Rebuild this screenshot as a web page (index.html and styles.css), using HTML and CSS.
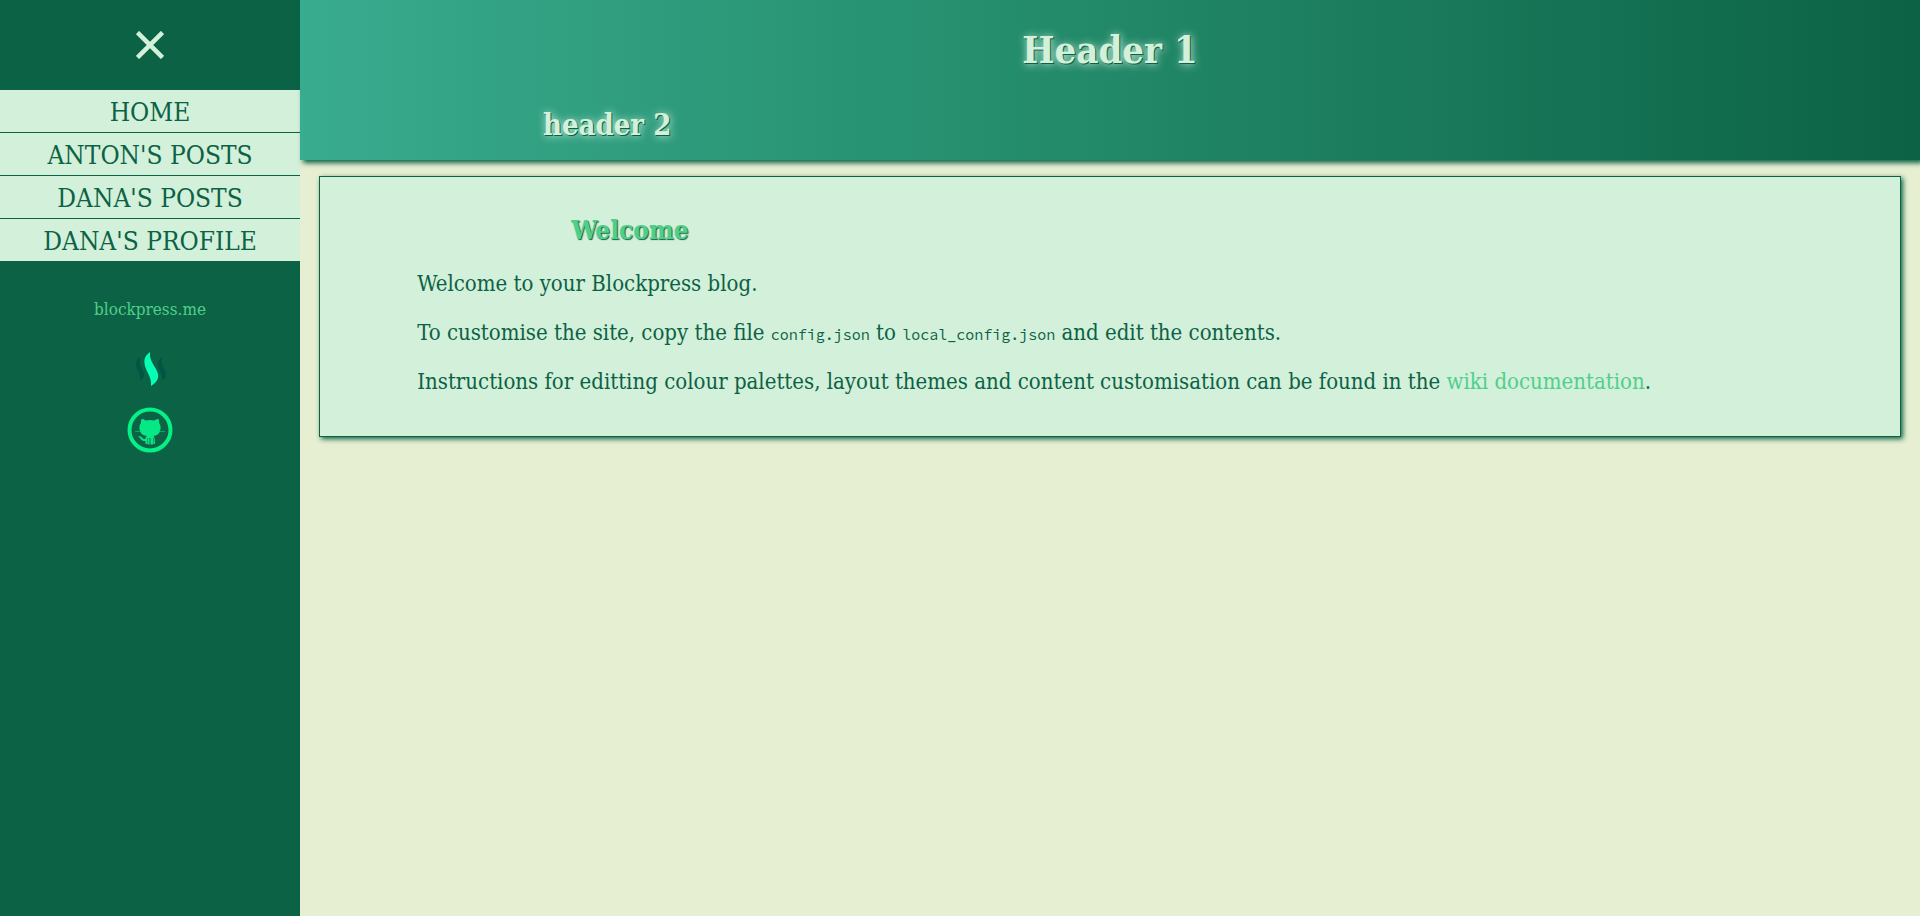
FILE: index.html
```html
<!DOCTYPE html>
<html lang="en">
<head>
<meta charset="utf-8">
<title>Header 1</title>
<link rel="stylesheet" href="styles.css">
</head>
<body>
<aside class="sidebar">
  <button class="close" type="button" aria-label="Close menu">
    <svg width="28" height="28" viewBox="0 0 28 28" aria-hidden="true"><path d="M1.500 1.500 26.500 26.500M26.500 1.500 1.500 26.500" stroke="currentColor" stroke-width="4.500"/></svg>
  </button>
  <nav class="menu">
    <a href="#home">HOME</a>
    <a href="#anton">ANTON'S POSTS</a>
    <a href="#dana">DANA'S POSTS</a>
    <a href="#profile">DANA'S PROFILE</a>
  </nav>
  <a class="site" href="#blockpress">blockpress.me</a>
  <a class="icon" href="#steem" aria-label="Steem">
    <svg width="46" height="46" viewBox="0 0 46 46" aria-hidden="true">
      <path fill="#005642" d="M14 11C10 13 8 16 9 20C10 25 14 28 13 35C17 32 18 29 16 25C14 20 11 16 14 11Z"/>
      <path fill="#005642" d="M36 11C32 13 30 16 31 20C32 25 36 28 35 35C39 32 40 29 38 25C36 20 33 16 36 11Z"/>
      <path fill="#06ffb4" d="M23 6C19 9 17 12 17.500 17C18 25 25 30 24 40C29 37 32 33 31 28C29 20 22 16 23 6Z"/>
    </svg>
  </a>
  <a class="icon" href="#github" aria-label="GitHub">
    <svg width="46" height="46" viewBox="0 0 46 46" aria-hidden="true">
      <circle cx="23" cy="23" r="20.500" fill="none" stroke="#06f088" stroke-width="4"/>
      <path fill="#06e886" d="M14.500 12C16.500 11.500 18 13 19 13.500Q23 12.500 27 13.500C28 13 30 11.500 31.500 12Q32.500 14 32 16C34 18 34 21 33 24C32 27 30 28.500 26.500 29C27.500 30 28 32 28 37H26.500V31H26V37.500H23.500V31H22.500V37.500H20.500V31H20V37H18.500V34C15 34.500 14 32.500 13 31L11 29.500C14 28.500 15 30.500 16 31.500C17 32.500 18 32 18.500 31.500C18.500 30 19 29.500 20 29C16 28.500 14 27 13 24C12 21 12 18 14 16Q13.500 14 14.500 12Z"/>
      <path d="M8 24.500H13M33 24.500H38" stroke="#06a86a" stroke-width="1"/>
    </svg>
  </a>
</aside>
<main class="page">
  <header class="banner">
    <h1>Header 1</h1>
    <h2>header 2</h2>
  </header>
  <article class="card">
    <h3>Welcome</h3>
    <p>Welcome to your Blockpress blog.</p>
    <p>To customise the site, copy the file <code>config.json</code> to <code>local_config.json</code> and edit the contents.</p>
    <p>Instructions for editting colour palettes, layout themes and content customisation can be found in the <a href="#wiki">wiki documentation</a>.</p>
  </article>
</main>
</body>
</html>
```
FILE: styles.css
```css
* { box-sizing: border-box; }
body {
  margin: 0;
  min-height: 100vh;
  display: flex;
  background: #e6efd2;
  color: #0c6245;
  font-family: "Roboto Slab", "DejaVu Serif Condensed", "DejaVu Serif", serif;
}
a { color: #50cf8b; text-decoration: none; }
.sidebar {
  flex: 0 0 300px;
  display: flex;
  flex-direction: column;
  align-items: center;
  background: #0c6245;
}
.close {
  width: 100%;
  height: 90px;
  padding: 0;
  border: 0;
  background: none;
  color: #d3f0da;
  cursor: pointer;
}
.close svg { display: block; margin: 0 auto; }
.menu { width: 100%; display: flex; flex-direction: column; gap: 1px; }
.menu a {
  padding-top: 2px;
  background: #d3f0da;
  color: #0c6245;
  font-size: 26px;
  line-height: 40px;
  text-align: center;
}
.site { margin: 36px 0 25px; font-size: 17px; line-height: 24px; }
.icon { height: 46px; margin-bottom: 15px; }
.icon svg { display: block; }
.page { flex: 1; min-width: 0; }
.banner {
  height: 160px;
  padding-top: 20px;
  background: linear-gradient(to right, #39ab8e, #26906f 40%, #0c6245);
  box-shadow: 3px 3px 5px #0c6245;
  color: #d3f0da;
  text-shadow: 1px 1px 0 #0c6245, 1px 1px 8px #d3f0da;
}
.banner h1 { margin: 0; font-size: 38px; line-height: 60px; text-align: center; }
.banner h2 { margin: 25px 0 0 15%; font-size: 29px; line-height: 40px; }
.card {
  margin: 16px 19px;
  padding: 33px 6% 40px;
  border: 1px solid #0c6245;
  background: #d3f0da;
  box-shadow: 2px 2px 5px #0c6245;
  font-size: 22px;
  line-height: 28px;
}
.card h3 {
  margin: 0 0 20px 154px;
  color: #50cf8b;
  font-size: 26px;
  line-height: 40px;
  text-shadow: 1px 1px 1px #0c6245;
}
.card p { margin: 0 0 21px; }
.card p:last-child { margin-bottom: 0; }
.card code { font-family: "Source Code Pro", "Noto Sans Mono", "DejaVu Sans Mono", monospace; font-size: 15px; line-height: 1; }
```
